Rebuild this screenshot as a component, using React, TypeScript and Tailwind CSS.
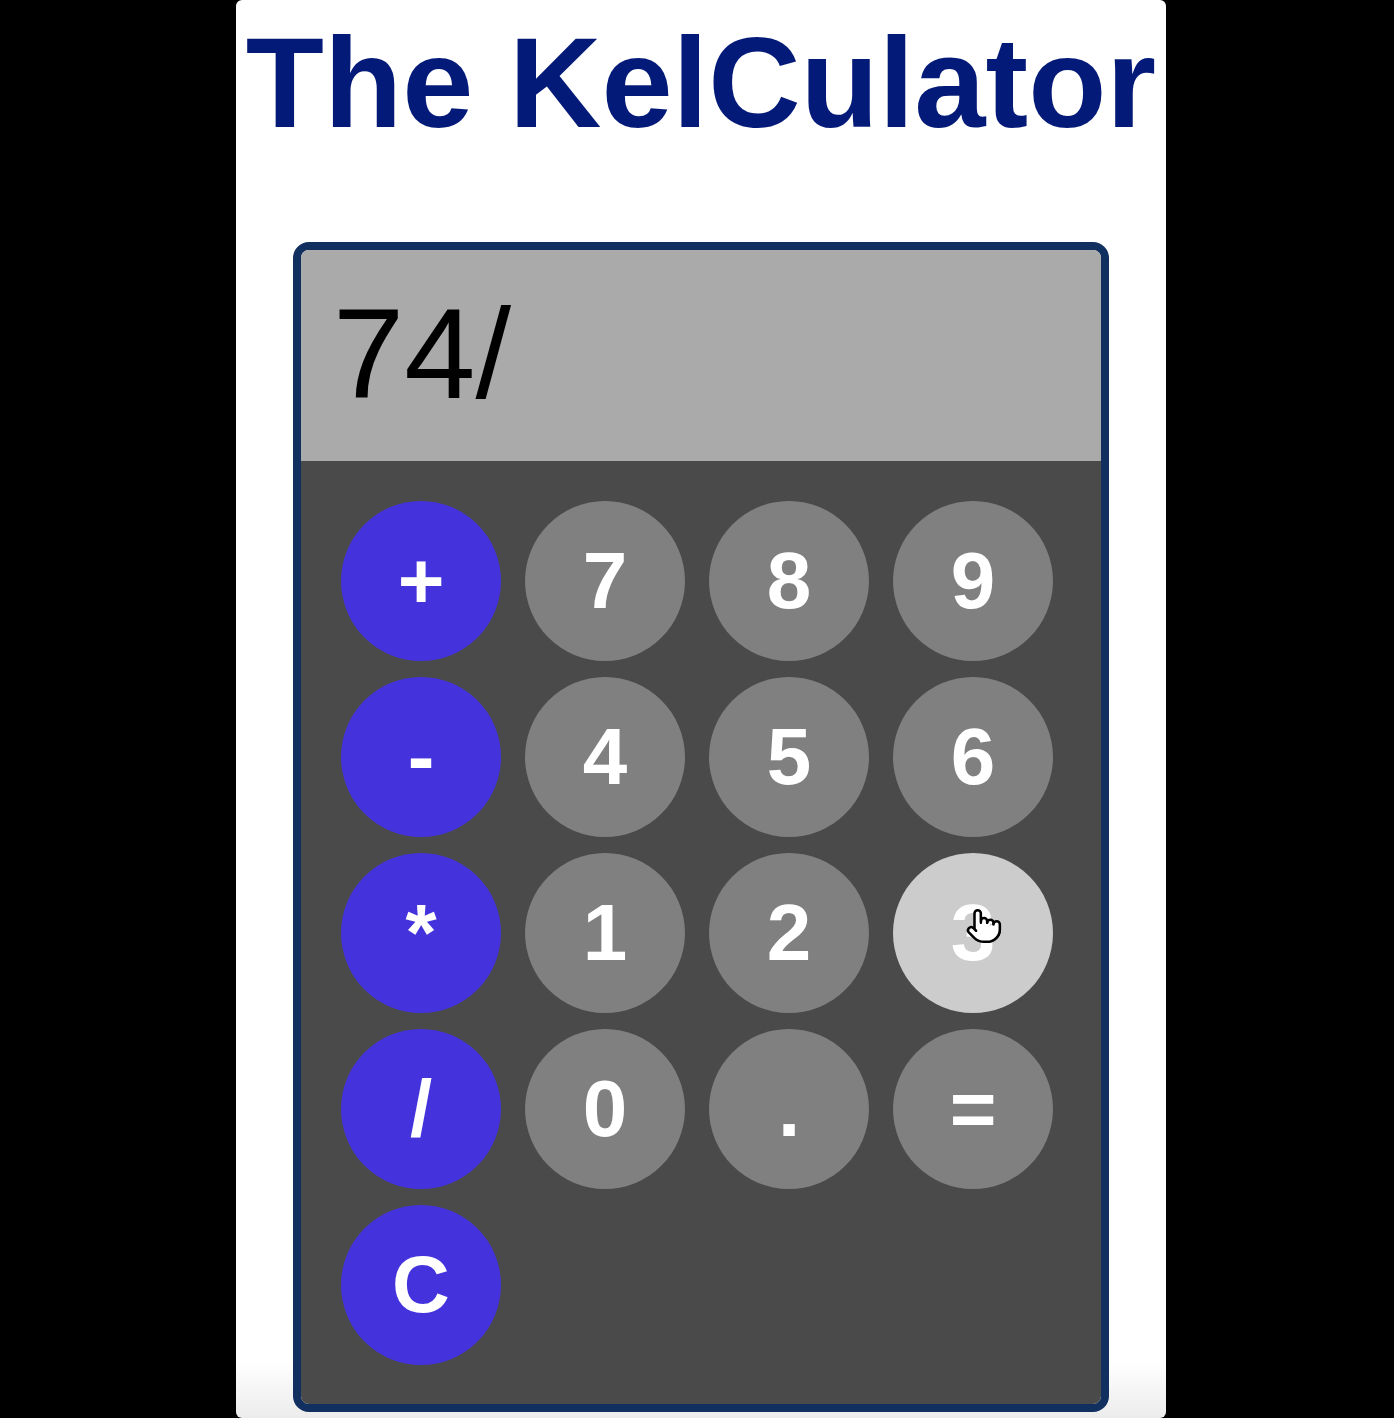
import React from "react";
import { Pointer } from "lucide-react";

const keys = [
  { label: "+", op: true },
  { label: "7" },
  { label: "8" },
  { label: "9" },
  { label: "-", op: true },
  { label: "4" },
  { label: "5" },
  { label: "6" },
  { label: "*", op: true },
  { label: "1" },
  { label: "2" },
  { label: "3", hover: true },
  { label: "/", op: true },
  { label: "0" },
  { label: "." },
  { label: "=" },
  { label: "C", op: true },
];

export default function App() {
  return (
    <div className="min-h-[1418px] bg-black flex justify-center pl-2 font-['Liberation_Sans',Arial,sans-serif]">
      <div className="w-[930px] rounded-md bg-gradient-to-b from-white from-[96%] to-[#ececec] flex flex-col items-center pt-[11px] pb-[5px]">
        <h1 className="text-[128px] leading-[143px] font-bold text-[#041a78] whitespace-nowrap">
          The KelCulator
        </h1>

        <div className="mt-[88px] w-[816px] border-8 border-[#12305f] rounded-[16px] overflow-hidden">
          {/* display */}
          <div className="h-[211px] bg-[#aaaaaa] px-8 py-8 text-[128px] leading-[143px] text-black">
            74/
          </div>

          {/* keypad */}
          <div className="bg-[#4a4a4a] pl-10 pt-10 pb-[39px] grid grid-cols-[repeat(4,160px)] gap-x-6 gap-y-4">
            {keys.map((k, i) => (
              <button
                key={i}
                className={`relative w-[160px] h-[160px] rounded-full flex items-center justify-center text-white font-bold text-[80px] leading-none ${
                  k.op ? "bg-[#4433dd]" : k.hover ? "bg-[#cccccc]" : "bg-[#808080]"
                }`}
              >
                {k.label}
                {k.hover && (
                  <Pointer
                    className="absolute left-[72px] top-[54px] w-[38px] h-[38px] text-black"
                    fill="white"
                    strokeWidth={1.6}
                  />
                )}
              </button>
            ))}
          </div>
        </div>
      </div>
    </div>
  );
}
